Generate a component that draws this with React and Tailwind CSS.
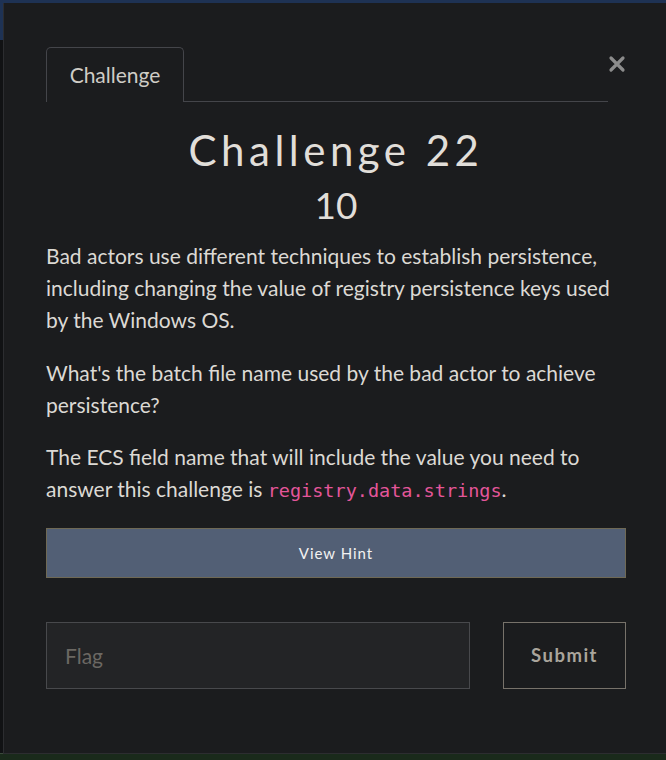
import React from "react";

const CloseIcon = () => (
  <svg width="18" height="18" viewBox="0 0 18 18" fill="none">
    <path d="M3 3L15 15M15 3L3 15" stroke="#8c8c8c" strokeWidth="3.2" strokeLinecap="round" />
  </svg>
);

export default function App() {
  return (
    <div className="relative w-[666px] h-[760px] overflow-hidden bg-[#111214]" style={{ fontFamily: "Lato, 'Open Sans', sans-serif" }}>
      {/* page behind the modal */}
      <div className="flex flex-col h-full">
        <div className="h-[40px] bg-[#1e3254]" />
        <div className="flex-1 bg-[#111214]" />
        <div className="h-[7px] bg-[#1a2a1b] border-t border-[#3b4a3c]" />
      </div>

      {/* modal */}
      <div className="absolute left-[3px] top-[3px] w-[680px] h-[751px] bg-[#1b1c1e] border-l border-b border-[#2c2d30]">
        <div className="pl-[42px] pr-[57px] pt-[44px]">
          <div className="flex items-start">
            <div className="flex flex-1">
              <div className="w-[138px] h-[55px] flex items-center justify-center border border-b-0 border-[#44454a] rounded-t-[5px] text-[21px] text-[#cfccc6]">
                Challenge
              </div>
              <div className="flex-1 border-b border-[#44454a]" />
            </div>
            <button className="w-[18px] mt-[8px] flex items-center justify-center">
              <CloseIcon />
            </button>
          </div>

          <h1 className="mt-[22px] text-center text-[42px] leading-[52px] tracking-[4.5px] text-[#e1ded9]">
            Challenge 22
          </h1>
          <div className="mt-[7px] text-center text-[37px] leading-[44px] text-[#e1ded9]">10</div>

          <div className="mt-[13px] text-[21px] leading-[32px] text-[#dcd9d4]">
            <p>
              Bad actors use different techniques to establish persistence, including changing the value of
              registry persistence keys used by the Windows OS.
            </p>
            <p className="mt-[21px]">What's the batch file name used by the bad actor to achieve persistence?</p>
            <p className="mt-[20px]">
              The ECS field name that will include the value you need to answer this challenge is{" "}
              <code className="text-[18.5px] leading-none text-[#e4569a]" style={{ fontFamily: "'DejaVu Sans Mono', monospace" }}>
                registry.data.strings
              </code>
              .
            </p>
          </div>

          <button className="mt-[23px] w-full h-[50px] bg-[#525f75] border border-[#6f6955] text-[15px] tracking-[1px] text-[#f2f2f2]">
            View Hint
          </button>

          <div className="mt-[44px] flex gap-[33px]">
            <div className="flex-1 h-[67px] bg-[#232426] border border-[#48494c] flex items-center px-[18px] text-[21px] text-[#6b6863]">
              Flag
            </div>
            <button className="w-[123px] h-[67px] border border-[#77726a] text-[18.5px] font-bold tracking-[1.5px] text-[#aaa59c]">
              Submit
            </button>
          </div>
        </div>
      </div>
    </div>
  );
}
